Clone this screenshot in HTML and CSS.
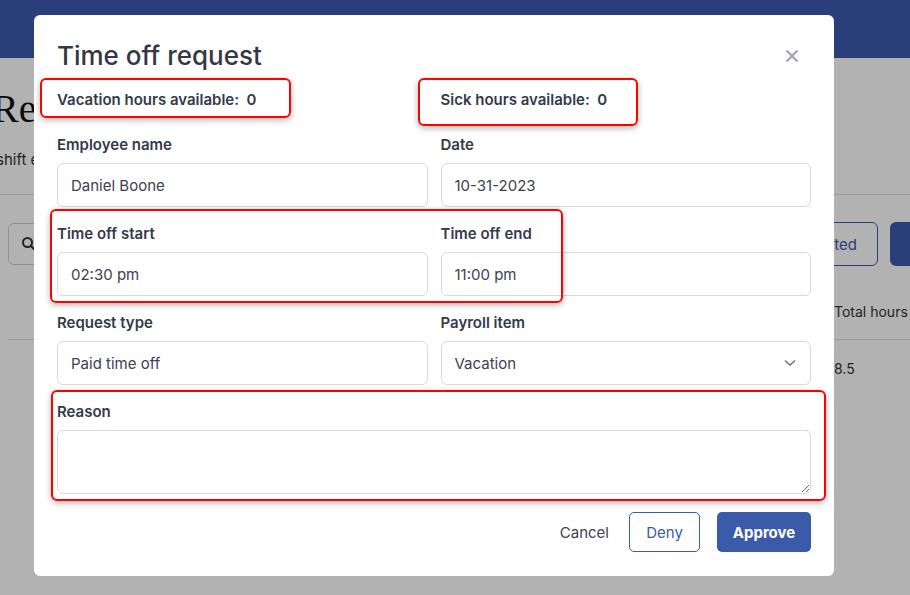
FILE: index.html
```html
<!DOCTYPE html>
<html lang="en">
<head>
<meta charset="UTF-8" />
<meta name="viewport" content="width=device-width, initial-scale=1.0" />
<title>Time off requests</title>
<link rel="stylesheet" href="styles.css">
</head>
<body>

<!-- Page behind the dialog -->
<div class="page">
  <div class="topbar"></div>

  <div class="page-head">
    <h1>Requests</h1>
    <p>shift end requests and time off</p>
  </div>

  <div class="toolbar">
    <div class="search">
      <svg width="16" height="16" viewBox="0 0 16 16"><circle cx="6.5" cy="6.5" r="4.5" fill="none" stroke="#333" stroke-width="2"/><line x1="10" y1="10" x2="14" y2="14" stroke="#333" stroke-width="2.2" stroke-linecap="round"/></svg>
    </div>
    <div class="toolbar-actions">
      <button class="btn-outline">Export selected</button>
      <button class="btn-fill">New request</button>
    </div>
  </div>

  <div class="table">
    <div class="table-row head">
      <span></span>
      <span>Total hours</span>
    </div>
    <div class="table-row">
      <span></span>
      <span>8.5</span>
    </div>
  </div>
</div>

<!-- Dialog -->
<div class="backdrop">
  <div class="modal">
    <div class="modal-head">
      <h2>Time off request</h2>
      <button class="close" aria-label="Close">
        <svg width="14" height="14" viewBox="0 0 14 14"><line x1="1.5" y1="1.5" x2="12.5" y2="12.5" stroke="#a3a6b8" stroke-width="2.4"/><line x1="12.5" y1="1.5" x2="1.5" y2="12.5" stroke="#a3a6b8" stroke-width="2.4"/></svg>
      </button>
    </div>

    <div class="hours">
      <div>Vacation hours available:&nbsp; 0</div>
      <div>Sick hours available:&nbsp; 0</div>
    </div>

    <form class="fields">
      <div class="field">
        <label for="emp">Employee name</label>
        <input type="text" id="emp" value="Daniel Boone" />
      </div>
      <div class="field">
        <label for="date">Date</label>
        <input type="text" id="date" value="10-31-2023" />
      </div>
      <div class="field">
        <label for="start">Time off start</label>
        <input type="text" id="start" value="02:30 pm" />
      </div>
      <div class="field">
        <label for="end">Time off end</label>
        <input type="text" id="end" value="11:00 pm" />
      </div>
      <div class="field">
        <label for="type">Request type</label>
        <input type="text" id="type" value="Paid time off" />
      </div>
      <div class="field">
        <label for="payroll">Payroll item</label>
        <div class="select-wrap">
          <select id="payroll">
            <option>Vacation</option>
            <option>Sick</option>
          </select>
          <svg class="chevron" width="12" height="8" viewBox="0 0 12 8"><polyline points="1,1.5 6,6 11,1.5" fill="none" stroke="#6b6f80" stroke-width="1.4"/></svg>
        </div>
      </div>
      <div class="field wide">
        <label for="reason">Reason</label>
        <textarea id="reason"></textarea>
      </div>
    </form>

    <div class="actions">
      <button class="btn-text">Cancel</button>
      <button class="btn-deny">Deny</button>
      <button class="btn-approve">Approve</button>
    </div>

    <!-- red review marks -->
    <div class="mark mark-vacation"></div>
    <div class="mark mark-sick"></div>
    <div class="mark mark-time"></div>
    <div class="mark mark-reason"></div>
  </div>
</div>

</body>
</html>
```

FILE: styles.css
```css
/* General */
body {
  margin: 0;
  font-family: 'Inter', 'Noto Sans', sans-serif;
  color: #333;
  background: #fff;
  overflow: hidden;
  height: 595px;
}

/* Page behind */
.page {
  width: 910px;
}
.topbar {
  height: 58px;
  background: #3d5aae;
}
.page-head {
  margin-left: -8px;
  padding-top: 28px;
  border-bottom: 1px solid #dcdcdc;
  height: 137px;
  box-sizing: border-box;
}
.page-head h1 {
  margin: 0;
  font-family: 'Liberation Serif', serif;
  font-weight: 400;
  font-size: 40px;
  line-height: 46px;
  color: #111;
}
.page-head p {
  margin: 18px 0 0 4px;
  font-size: 15px;
  line-height: 20px;
}

.toolbar {
  display: flex;
  justify-content: space-between;
  align-items: center;
  margin-top: 27px;
  padding-left: 8px;
}
.search {
  width: 260px;
  height: 42px;
  border: 1px solid #ccc;
  border-radius: 6px;
  display: flex;
  align-items: center;
  padding-left: 12px;
  box-sizing: border-box;
}
.toolbar-actions {
  display: flex;
  gap: 12px;
  margin-right: -80px;
}
.btn-outline,
.btn-fill {
  height: 44px;
  padding: 0 20px;
  border-radius: 6px;
  font-family: inherit;
  font-size: 15px;
}
.btn-outline {
  border: 1px solid #3d5aae;
  background: #fff;
  color: #3d5aae;
}
.btn-fill {
  width: 100px;
  border: none;
  background: #3d5aae;
  color: #fff;
}

.table {
  margin-left: 8px;
  width: 1000px;
}
.table-row {
  display: grid;
  grid-template-columns: 826px 1fr;
  font-size: 14px;
  height: 56px;
  align-items: center;
}
.table-row.head {
  height: 74px;
  padding-top: 18px;
  border-bottom: 1px solid #dcdcdc;
  box-sizing: border-box;
}

/* Dialog */
.backdrop {
  position: fixed;
  inset: 0;
  background: rgba(0,0,0,0.3);
  display: flex;
  align-items: flex-start;
  padding: 15px 0 0 34px;
}
.modal {
  position: relative;
  width: 800px;
  box-sizing: border-box;
  padding: 23px 23px 24px;
  background: #fff;
  border-radius: 6px;
}
.modal-head {
  display: flex;
  justify-content: space-between;
  align-items: center;
}
.modal-head h2 {
  margin: 0;
  font-size: 26px;
  line-height: 36px;
  font-weight: 500;
  color: #343746;
}
.close {
  border: none;
  background: none;
  padding: 0;
  margin-right: 12px;
  display: flex;
  cursor: pointer;
}

.hours {
  display: grid;
  grid-template-columns: 1fr 1fr;
  column-gap: 13px;
  margin: 16px 0 25px;
  font-size: 15px;
  line-height: 20px;
  font-weight: 600;
  color: #343a4a;
}

.fields {
  display: grid;
  grid-template-columns: 1fr 1fr;
  column-gap: 13px;
  row-gap: 17px;
}
.field {
  display: flex;
  flex-direction: column;
}
.field.wide {
  grid-column: 1 / 3;
}
.field label {
  font-size: 15px;
  line-height: 20px;
  font-weight: 600;
  color: #343a4a;
  margin-bottom: 8px;
}
.field input,
.field select,
.field textarea {
  height: 44px;
  box-sizing: border-box;
  border: 1px solid #dcd7da;
  border-radius: 6px;
  padding: 0 13px;
  font-family: inherit;
  font-size: 15px;
  color: #3d4150;
  background: #fff;
  outline: none;
}
.select-wrap {
  position: relative;
  display: flex;
  flex-direction: column;
}
.field select {
  appearance: none;
}
.chevron {
  position: absolute;
  right: 15px;
  top: 18px;
  pointer-events: none;
}
.field textarea {
  height: 64px;
  padding: 10px 13px;
  resize: vertical;
}

.actions {
  display: flex;
  justify-content: flex-end;
  align-items: center;
  margin-top: 18px;
}
.actions button {
  height: 40px;
  border-radius: 5px;
  font-family: inherit;
  font-size: 15px;
  cursor: pointer;
}
.btn-text {
  border: none;
  background: none;
  color: #3d4150;
  padding: 0;
  margin-right: 20px;
}
.btn-deny {
  width: 71px;
  border: 1px solid #3b5ba9;
  background: #fff;
  color: #3b5ba9;
  margin-right: 17px;
}
.btn-approve {
  width: 94px;
  border: none;
  background: #3b5ba9;
  color: #fff;
  font-weight: 700;
}

/* Review marks over the dialog */
.mark {
  position: absolute;
  box-sizing: border-box;
  border: 2px solid #f00;
  border-radius: 6px;
  box-shadow: 0 2px 6px rgba(0,0,0,0.3);
  pointer-events: none;
}
.mark-vacation { left: 6px;   top: 63px;  width: 251px; height: 40px; }
.mark-sick     { left: 384px; top: 63px;  width: 220px; height: 48px; }
.mark-time     { left: 16px;  top: 194px; width: 513px; height: 94px; }
.mark-reason   { left: 17px;  top: 375px; width: 775px; height: 111px; }
```
